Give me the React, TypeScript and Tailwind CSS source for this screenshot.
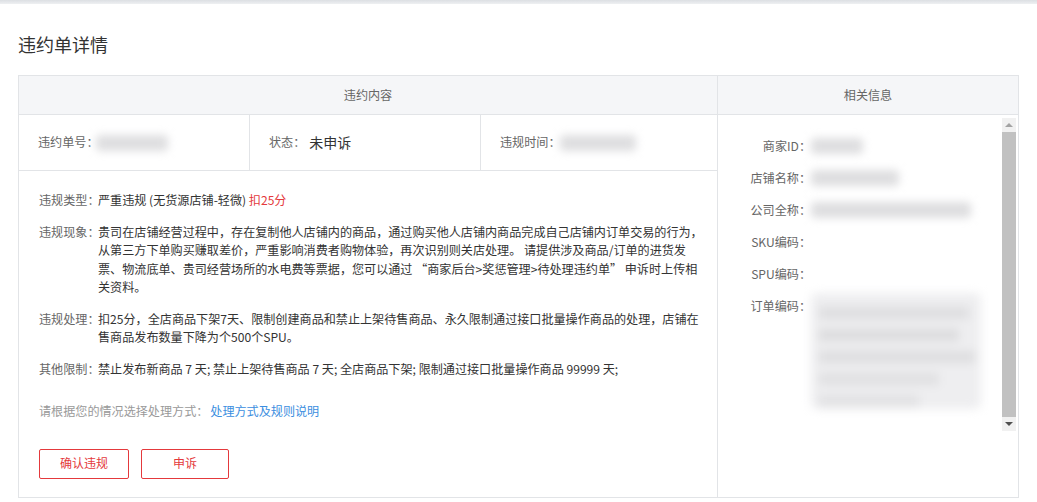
import React from "react";

function Para({ label, children }: { label: string; children: React.ReactNode }) {
  return (
    <div className="flex items-start">
      <div className="w-[59px] shrink-0 whitespace-nowrap text-[#666]">{label}</div>
      <div className="text-[#333] whitespace-nowrap">{children}</div>
    </div>
  );
}

function RightRow({ label, children }: { label: string; children?: React.ReactNode }) {
  return (
    <div className="flex items-start h-[32px]">
      <div className="w-[93px] shrink-0 whitespace-nowrap text-right text-[#666] leading-[18px]">{label}</div>
      <div className="pl-[0px]">{children}</div>
    </div>
  );
}

export default function App() {
  return (
    <div className="w-[1037px] h-[502px] bg-white overflow-hidden font-['Noto_Sans_CJK_SC','Noto_Sans',sans-serif] text-[12.1px] text-[#333]">
      <div className="h-[4px] bg-gradient-to-b from-[#dcdfe3] to-[#eef0f2]" />
      <div className="px-[18px]">
        <h1 className="pt-[27px] text-[18px] leading-[26px] text-[#333] font-normal">违约单详情</h1>
        <div className="mt-[18px] flex border border-[#e2e4e7] h-[423px]">
          {/* left column */}
          <div className="w-[699px] shrink-0 border-r border-[#e2e4e7] flex flex-col">
            <div className="h-[39px] shrink-0 bg-[#f5f6f8] border-b border-[#e2e4e7] flex items-center justify-center text-[#666]">
              违约内容
            </div>
            <div className="h-[56px] shrink-0 grid grid-cols-[231px_231px_1fr] border-b border-[#e2e4e7]">
              <div className="flex items-center pl-[19px] border-r border-[#e2e4e7]">
                <span className="text-[#666] whitespace-nowrap">违约单号：</span>
                <span className="ml-[-2px] w-[72px] h-[16px] rounded-[4px] bg-[#dedee0] blur-[4px]" />
              </div>
              <div className="flex items-center pl-[19px] border-r border-[#e2e4e7]">
                <span className="text-[#666] whitespace-nowrap">状态：</span>
                <span className="ml-[4px] text-[14px] text-[#333] whitespace-nowrap">未申诉</span>
              </div>
              <div className="flex items-center pl-[19px]">
                <span className="text-[#666] whitespace-nowrap">违规时间：</span>
                <span className="w-[76px] h-[16px] rounded-[4px] bg-[#dedee0] blur-[4px]" />
              </div>
            </div>
            <div className="flex-1 pl-[20px] pt-[20px] leading-[18.5px]">
              <Para label="违规类型：">
                严重违规 (无货源店铺-轻微) <span className="text-[#e4393c]">扣25分</span>
              </Para>
              <div className="mt-[13px]">
                <Para label="违规现象：">
                  <div>贵司在店铺经营过程中，存在复制他人店铺内的商品，通过购买他人店铺内商品完成自己店铺内订单交易的行为，</div>
                  <div>从第三方下单购买赚取差价，严重影响消费者购物体验，再次识别则关店处理。 请提供涉及商品/订单的进货发</div>
                  <div>票、物流底单、贵司经营场所的水电费等票据，您可以通过 “商家后台&gt;奖惩管理&gt;待处理违约单” 申诉时上传相</div>
                  <div>关资料。</div>
                </Para>
              </div>
              <div className="mt-[13px]">
                <Para label="违规处理：">
                  <div>扣25分，全店商品下架7天、限制创建商品和禁止上架待售商品、永久限制通过接口批量操作商品的处理，店铺在</div>
                  <div>售商品发布数量下降为个500个SPU。</div>
                </Para>
              </div>
              <div className="mt-[13px]">
                <Para label="其他限制：">
                  禁止发布新商品 7 天; 禁止上架待售商品 7 天; 全店商品下架; 限制通过接口批量操作商品 99999 天;
                </Para>
              </div>
              <div className="mt-[24px] flex whitespace-nowrap">
                <span className="text-[#999]">请根据您的情况选择处理方式：</span>
                <span className="ml-[2px] text-[#3b8ee0]">处理方式及规则说明</span>
              </div>
              <div className="mt-[28px] flex gap-[12px]">
                <button className="w-[90px] h-[30px] border border-[#e4393c] rounded-[2px] text-[#e4393c] text-[12px] bg-white">
                  确认违规
                </button>
                <button className="w-[88px] h-[30px] border border-[#e4393c] rounded-[2px] text-[#e4393c] text-[12px] bg-white">
                  申诉
                </button>
              </div>
            </div>
          </div>
          {/* right column */}
          <div className="flex-1 flex flex-col">
            <div className="h-[39px] shrink-0 bg-[#f5f6f8] border-b border-[#e2e4e7] flex items-center justify-center text-[#666]">
              相关信息
            </div>
            <div className="flex items-start">
              <div className="flex-1 pt-[22px]">
                <RightRow label="商家ID：">
                  <div className="mt-[1px] w-[52px] h-[16px] rounded-[4px] bg-[#dedee0] blur-[4px]" />
                </RightRow>
                <RightRow label="店铺名称：">
                  <div className="mt-[1px] w-[88px] h-[16px] rounded-[4px] bg-[#dedee0] blur-[4px]" />
                </RightRow>
                <RightRow label="公司全称：">
                  <div className="mt-[1px] w-[160px] h-[16px] rounded-[4px] bg-[#dedee0] blur-[4px]" />
                </RightRow>
                <RightRow label="SKU编码：" />
                <RightRow label="SPU编码：" />
                <RightRow label="订单编码：">
                  <div className="mt-[-4px] w-[170px] h-[116px] rounded-[6px] bg-[#eeeef0] blur-[5px] flex flex-col gap-[10px] pt-[14px] px-[8px]">
                    <div className="h-[12px] w-[150px] bg-[#dedee0]" />
                    <div className="h-[12px] w-[140px] bg-[#dcdcde]" />
                    <div className="h-[12px] w-[156px] bg-[#dedee0]" />
                    <div className="h-[12px] w-[120px] bg-[#e0e0e2]" />
                    <div className="h-[12px] w-[100px] bg-[#e2e2e4]" />
                  </div>
                </RightRow>
              </div>
              {/* scrollbar */}
              <div className="mt-[3px] mr-[2px] w-[14px] h-[313px] bg-[#f1f1f1] flex flex-col items-center">
                <div className="h-[14px] w-full flex items-center justify-center">
                  <div className="w-0 h-0 border-l-[4px] border-r-[4px] border-b-[4px] border-l-transparent border-r-transparent border-b-[#a3a3a3]" />
                </div>
                <div className="flex-1 w-[14px] bg-[#c1c1c1]" />
                <div className="h-[14px] w-full flex items-center justify-center">
                  <div className="w-0 h-0 border-l-[4px] border-r-[4px] border-t-[4px] border-l-transparent border-r-transparent border-t-[#505050]" />
                </div>
              </div>
            </div>
          </div>
        </div>
      </div>
    </div>
  );
}
